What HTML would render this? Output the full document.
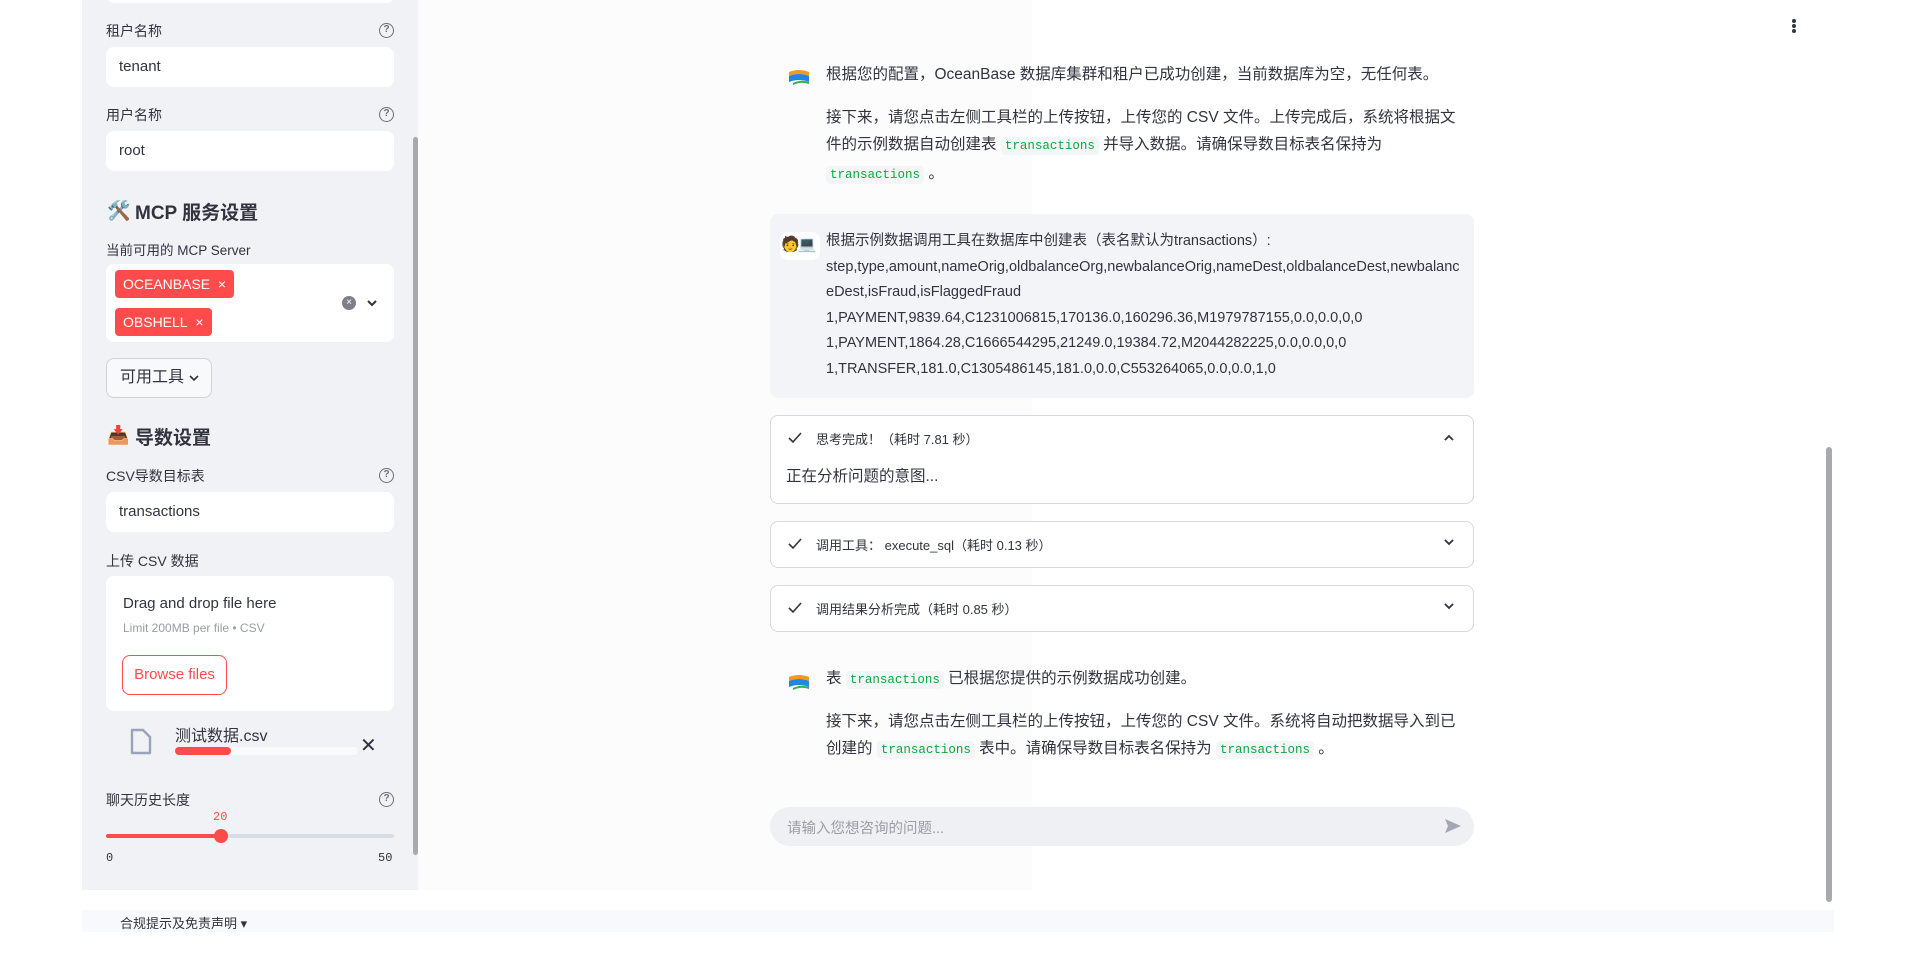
<!DOCTYPE html>
<html><head><meta charset="utf-8">
<style>
*{box-sizing:border-box;margin:0;padding:0}
body{width:1920px;height:953px;overflow:hidden;background:#fff;font-family:"Liberation Sans","Noto Sans CJK SC",sans-serif;color:#31333f;position:relative}
.a{position:absolute}
.side{left:82px;top:0;width:336px;height:890px;background:#f0f2f6}
.lbl{font-size:14px;color:#31333f;left:106px}
.help{width:15px;height:15px;border:1.3px solid #6b6e7a;border-radius:50%;font-size:10px;color:#6b6e7a;text-align:center;line-height:12px;left:379px;font-weight:bold}
.inp{left:106px;width:288px;height:40px;background:#fff;border-radius:8px;font-size:15px;padding-left:13px;line-height:40px}
.h3{left:106px;font-size:19px;font-weight:bold;color:#31333f}
.tag{background:#ff4b4b;color:#fff;font-size:14px;height:28px;line-height:28px;padding:0 8px;border-radius:4px;left:115px}
.main p{font-size:15.5px;line-height:27px}
code{font-family:"Liberation Mono",monospace;font-size:12.5px;color:#09ab3b;background:#f3f5f7;padding:2px 4px;border-radius:4px}
.exp{left:770px;width:704px;border:1px solid #d6d8de;border-radius:8px;background:#fff}
.eh{font-size:13px;position:absolute;left:45px;top:13px}
.chk{position:absolute;left:17px;top:16px}
.chev{position:absolute;right:18px;top:16px}
</style></head><body>
<div class="a" style="left:418px;top:0;width:614px;height:890px;background:#fcfcfd"></div>
<div class="a side"></div>
<div class="a" style="left:413px;top:137px;width:5px;height:718px;background:#a8a9ae;border-radius:3px"></div>
<div class="a" style="left:106px;top:-30px;width:288px;height:33px;background:#fff;border-radius:8px"></div>

<div class="a lbl" style="top:21px">租户名称</div><div class="a help" style="top:23px">?</div>
<div class="a inp" style="top:47px">tenant</div>
<div class="a lbl" style="top:105px">用户名称</div><div class="a help" style="top:107px">?</div>
<div class="a inp" style="top:131px">root</div>

<div class="a" style="left:107px;top:199px;font-size:19px">🛠️</div>
<div class="a h3" style="top:198px;left:135px">MCP 服务设置</div>
<div class="a lbl" style="top:239px;font-size:13.5px">当前可用的 MCP Server</div>
<div class="a" style="left:106px;top:264px;width:288px;height:78px;background:#fff;border-radius:8px"></div>
<div class="a tag" style="top:270px">OCEANBASE&nbsp;&nbsp;×</div>
<div class="a tag" style="top:308px">OBSHELL&nbsp;&nbsp;×</div>
<div class="a" style="left:342px;top:296px;width:14px;height:14px;border-radius:50%;background:#7d808c;color:#fff;font-size:10px;text-align:center;line-height:14px">×</div>
<svg class="a" style="left:366px;top:298px" width="12" height="10"><path d="M2 3l4 4 4-4" stroke="#31333f" stroke-width="2" fill="none"/></svg>
<div class="a" style="left:106px;top:358px;width:106px;height:40px;border:1px solid #d0d2d8;border-radius:8px;background:#f8f9fb;font-size:16px;line-height:38px;padding-left:13px">可用工具 <svg width="12" height="10" style="vertical-align:middle"><path d="M2 3l4 4 4-4" stroke="#31333f" stroke-width="1.6" fill="none"/></svg></div>

<div class="a" style="left:107px;top:425px;font-size:18px">📥</div>
<div class="a h3" style="top:423px;left:135px">导数设置</div>
<div class="a lbl" style="top:466px">CSV导数目标表</div><div class="a help" style="top:468px">?</div>
<div class="a inp" style="top:492px">transactions</div>
<div class="a lbl" style="top:551px">上传 CSV 数据</div>
<div class="a" style="left:106px;top:576px;width:288px;height:135px;background:#fff;border-radius:8px"></div>
<div class="a" style="left:123px;top:595px;font-size:15px">Drag and drop file here</div>
<div class="a" style="left:123px;top:621px;font-size:12px;color:#9a9ca6">Limit 200MB per file • CSV</div>
<div class="a" style="left:122px;top:655px;width:105px;height:40px;border:1px solid #ff4b4b;border-radius:8px;color:#ff4b4b;font-size:15px;line-height:38px;text-align:center">Browse files</div>
<svg class="a" style="left:130px;top:728px" width="22" height="27"><path d="M2 2h11l7 7v16H2z" fill="none" stroke="#9aa3b8" stroke-width="2.4" stroke-linejoin="round"/></svg>
<div class="a" style="left:175px;top:722px;font-size:16px">测试数据.csv</div>
<div class="a" style="left:175px;top:747px;width:183px;height:8px;background:#fafafa;border-radius:4px"></div>
<div class="a" style="left:175px;top:747px;width:56px;height:8px;background:#ff4b4b;border-radius:4px"></div>
<div class="a" style="left:360px;top:733px;font-size:20px">✕</div>

<div class="a lbl" style="top:790px">聊天历史长度</div><div class="a help" style="top:792px">?</div>
<div class="a" style="left:213px;top:810px;font-size:12px;color:#ff4b4b;font-family:'Liberation Mono',monospace">20</div>
<div class="a" style="left:106px;top:834px;width:288px;height:4px;background:#d8dce4;border-radius:2px"></div>
<div class="a" style="left:106px;top:834px;width:115px;height:4px;background:#ff4b4b;border-radius:2px"></div>
<div class="a" style="left:214px;top:829px;width:14px;height:14px;background:#ff4b4b;border-radius:50%"></div>
<div class="a" style="left:106px;top:851px;font-size:12px;font-family:'Liberation Mono',monospace">0</div>
<div class="a" style="left:378px;top:851px;font-size:12px;font-family:'Liberation Mono',monospace">50</div>

<div class="a" style="left:82px;top:910px;width:1752px;height:22px;background:#f8f9fc"></div>
<div class="a" style="left:120px;top:913px;font-size:13px">合规提示及免责声明 ▾</div>

<div class="a" style="left:1792px;top:19px;width:4px;height:4px;border-radius:50%;background:#31333f;box-shadow:0 5px 0 #31333f,0 10px 0 #31333f"></div>
<div class="a" style="left:1826px;top:447px;width:6px;height:455px;background:#a8a9ae;border-radius:3px"></div>

<div class="main">
<svg class="a" style="left:789px;top:69px" width="20" height="16"><path d="M0 3 Q10 -1 20 3 V7 Q10 3 0 7z" fill="#f39a1a"/><path d="M0 7 Q10 3 20 7 V13 Q10 9 0 13z" fill="#1f86e8"/><path d="M4 14 Q12 10 20 13 V15 Q12 12 4 16z" fill="#2cb34a"/></svg>
<div class="a" style="left:826px;top:61px;width:640px"><p>根据您的配置，OceanBase 数据库集群和租户已成功创建，当前数据库为空，无任何表。</p>
<p style="margin-top:16px">接下来，请您点击左侧工具栏的上传按钮，上传您的 CSV 文件。上传完成后，系统将根据文件的示例数据自动创建表 <code>transactions</code> 并导入数据。请确保导数目标表名保持为 <code>transactions</code> 。</p></div>

<div class="a" style="left:770px;top:214px;width:704px;height:184px;background:#f3f4f7;border-radius:8px"></div>
<div class="a" style="left:780px;top:232px;width:40px;height:28px;background:#fff;border-radius:8px"></div>
<div class="a" style="left:781px;top:235px;font-size:15px;letter-spacing:-2px">🧑💻</div>
<div class="a" style="left:826px;top:229px;width:640px;font-size:14.5px;line-height:25.6px;word-break:break-all">根据示例数据调用工具在数据库中创建表（表名默认为transactions）:<br>step,type,amount,nameOrig,oldbalanceOrg,newbalanceOrig,nameDest,oldbalanceDest,newbalanceDest,isFraud,isFlaggedFraud<br>1,PAYMENT,9839.64,C1231006815,170136.0,160296.36,M1979787155,0.0,0.0,0,0<br>1,PAYMENT,1864.28,C1666544295,21249.0,19384.72,M2044282225,0.0,0.0,0,0<br>1,TRANSFER,181.0,C1305486145,181.0,0.0,C553264065,0.0,0.0,1,0</div>

<div class="a exp" style="top:415px;height:89px"><svg class="chk" width="14" height="12"><path d="M1 6l4 4 8-9" stroke="#31333f" stroke-width="1.6" fill="none"/></svg><div class="eh">思考完成！（耗时 7.81 秒）</div><svg class="chev" width="12" height="8" style="top:17px"><path d="M2 7l4-4 4 4" stroke="#31333f" stroke-width="1.8" fill="none"/></svg><div style="position:absolute;left:15px;top:48px;font-size:15.5px">正在分析问题的意图...</div></div>
<div class="a exp" style="top:521px;height:47px"><svg class="chk" width="14" height="12"><path d="M1 6l4 4 8-9" stroke="#31333f" stroke-width="1.6" fill="none"/></svg><div class="eh">调用工具： execute_sql（耗时 0.13 秒）</div><svg class="chev" width="12" height="8"><path d="M2 2l4 4 4-4" stroke="#31333f" stroke-width="1.8" fill="none"/></svg></div>
<div class="a exp" style="top:585px;height:47px"><svg class="chk" width="14" height="12"><path d="M1 6l4 4 8-9" stroke="#31333f" stroke-width="1.6" fill="none"/></svg><div class="eh">调用结果分析完成（耗时 0.85 秒）</div><svg class="chev" width="12" height="8"><path d="M2 2l4 4 4-4" stroke="#31333f" stroke-width="1.8" fill="none"/></svg></div>

<svg class="a" style="left:789px;top:674px" width="20" height="16"><path d="M0 3 Q10 -1 20 3 V7 Q10 3 0 7z" fill="#f39a1a"/><path d="M0 7 Q10 3 20 7 V13 Q10 9 0 13z" fill="#1f86e8"/><path d="M4 14 Q12 10 20 13 V15 Q12 12 4 16z" fill="#2cb34a"/></svg>
<div class="a" style="left:826px;top:665px;width:640px"><p>表 <code>transactions</code> 已根据您提供的示例数据成功创建。</p>
<p style="margin-top:14px">接下来，请您点击左侧工具栏的上传按钮，上传您的 CSV 文件。系统将自动把数据导入到已创建的 <code>transactions</code> 表中。请确保导数目标表名保持为 <code>transactions</code> 。</p></div>

<div class="a" style="left:770px;top:807px;width:704px;height:39px;background:#eff0f4;border-radius:20px"></div>
<div class="a" style="left:787px;top:817px;font-size:14.5px;color:#9a9ca6">请输入您想咨询的问题...</div>
<svg class="a" style="left:1444px;top:818px" width="18" height="16"><path d="M1 1l16 7-16 7 3-7z" fill="#a3a6b4"/></svg>
</div>
</body></html>
